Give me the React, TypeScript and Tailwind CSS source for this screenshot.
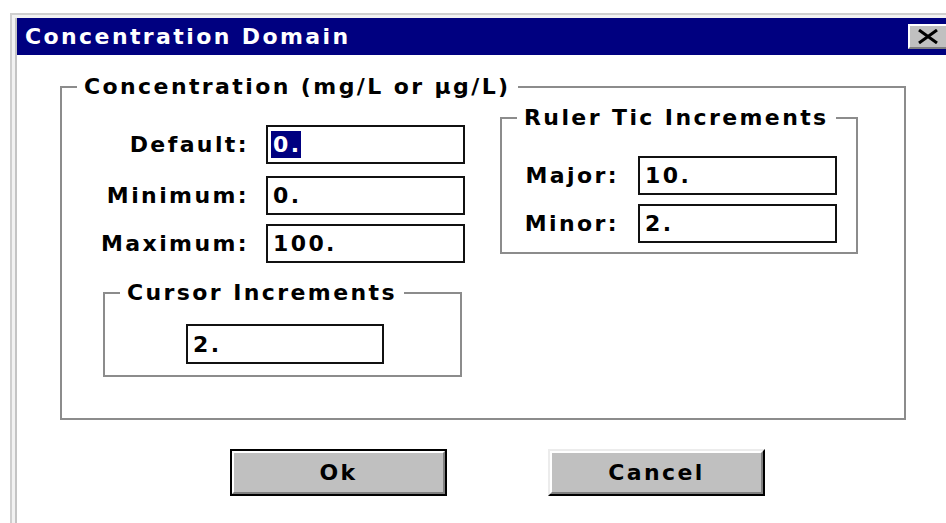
import type { ReactNode } from 'react';

// Text box with a thick dark outline, as in the classic dialog look
function Field({ value, selected, className = '' }: { value: string; selected?: boolean; className?: string }) {
    return (
        <div className={`h-[39px] w-[199px] border-2 border-[#111] bg-white flex items-center ${selected ? 'pl-[3px]' : 'pl-[5px]'} ${className}`}>
            {selected ? (
                <span className="bg-[#000080] text-white pl-[2px] leading-[27px]">{value}</span>
            ) : (
                <span className="leading-[27px]">{value}</span>
            )}
        </div>
    );
}

function Group({ title, className = '', children }: { title: string; className?: string; children: ReactNode }) {
    return (
        <fieldset className={`border-2 border-[#8c8c8c] ${className}`}>
            <legend className="ml-[15px] px-[7px] leading-[26px]">{title}</legend>
            {children}
        </fieldset>
    );
}

function Row({ label, labelWidth, value, selected, className = '', gap }: { label: string; labelWidth: string; value: string; selected?: boolean; className?: string; gap: string }) {
    return (
        <div className={`flex items-center ${className}`}>
            <div className={`${labelWidth} text-right`}>{label}</div>
            <Field value={value} selected={selected} className={gap} />
        </div>
    );
}

export default function App() {
    return (
        <div className="w-[946px] h-[523px] overflow-hidden bg-white text-black font-['DejaVu_Sans',sans-serif] font-bold text-[22px] tracking-[2.4px]">
            {/* window frame */}
            <div className="ml-[10px] mt-[13px] w-[960px] border-l-2 border-t-2 border-[#cfcfcf]">
                <div className="border-l-[3px] border-t-[3px] border-[#f2f2f2]">
                    <div className="border-l-2 border-[#c4c4c4] h-[520px]">
                        {/* title bar */}
                        <div className="h-[37px] bg-[#000080] flex items-center">
                            <span className="ml-[8px] text-white">Concentration Domain</span>
                            <div className="ml-auto mr-[18px] w-[44px] h-[25px] bg-[#c0c0c0] border-t-2 border-l-2 border-white border-b-2 border-b-[#808080] flex items-center pl-[6px]">
                                <svg width="24" height="15" viewBox="0 0 24 15">
                                    <path d="M3 1 L21 14 M21 1 L3 14" stroke="#000" strokeWidth="3" />
                                </svg>
                            </div>
                        </div>

                        {/* client area */}
                        <Group title="Concentration (mg/L or µg/L)" className="ml-[43px] mt-[19px] w-[846px] h-[346px]">
                            <div className="flex">
                                <div className="w-[438px]">
                                    <Row label="Default:" labelWidth="w-[187px]" gap="ml-[17px]" value="0." selected className="mt-[25px]" />
                                    <Row label="Minimum:" labelWidth="w-[187px]" gap="ml-[17px]" value="0." className="mt-[12px]" />
                                    <Row label="Maximum:" labelWidth="w-[187px]" gap="ml-[17px]" value="100." className="mt-[9px]" />

                                    <Group title="Cursor Increments" className="ml-[41px] mt-[17px] w-[359px] h-[97px]">
                                        <Field value="2." className="ml-[81px] mt-[18px] !w-[198px] !h-[40px]" />
                                    </Group>
                                </div>

                                <Group title="Ruler Tic Increments" className="mt-[5px] w-[358px] h-[149px]">
                                    <Row label="Major:" labelWidth="w-[117px]" gap="ml-[19px]" value="10." className="mt-[25px]" />
                                    <Row label="Minor:" labelWidth="w-[117px]" gap="ml-[19px]" value="2." className="mt-[9px]" />
                                </Group>
                            </div>
                        </Group>

                        {/* dialog buttons */}
                        <div className="flex mt-[29px]">
                            <button className="ml-[213px] w-[217px] h-[47px] border-2 border-black bg-[#c0c0c0]">
                                <div className="h-full border-2 border-t-white border-l-white border-b-[#808080] border-r-[#808080] flex items-center justify-center">
                                    Ok
                                </div>
                            </button>
                            <button className="ml-[101px] w-[217px] h-[47px] border-2 border-t-[#ececec] border-l-[#ececec] border-b-black border-r-black bg-[#c0c0c0]">
                                <div className="h-full border-2 border-t-white border-l-white border-b-[#808080] border-r-[#808080] flex items-center justify-center">
                                    Cancel
                                </div>
                            </button>
                        </div>
                    </div>
                </div>
            </div>
        </div>
    );
}
